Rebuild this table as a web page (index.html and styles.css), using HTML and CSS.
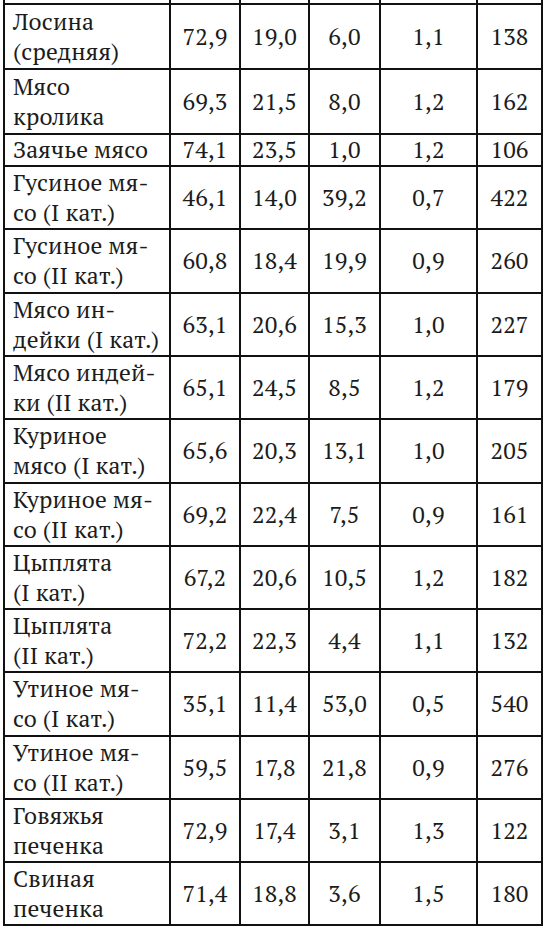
FILE: index.html
```html
<!DOCTYPE html>
<html lang="ru">
<head>
<meta charset="utf-8">
<title>Таблица</title>
<link rel="stylesheet" href="styles.css">
</head>
<body>
<table class="tbl">
  <colgroup>
    <col class="c-name"><col class="c-a"><col class="c-b"><col class="c-c"><col class="c-d"><col class="c-e">
  </colgroup>
  <tbody>
    <tr class="stub"><td></td><td></td><td></td><td></td><td></td><td></td></tr>
    <tr class="r2 r2a"><td class="name">Лосина<br>(средняя)</td><td>72,9</td><td>19,0</td><td>6,0</td><td>1,1</td><td>138</td></tr>
    <tr class="r2 r2a"><td class="name">Мясо<br>кролика</td><td>69,3</td><td>21,5</td><td>8,0</td><td>1,2</td><td>162</td></tr>
    <tr class="r1"><td class="name">Заячье мясо</td><td>74,1</td><td>23,5</td><td>1,0</td><td>1,2</td><td>106</td></tr>
    <tr class="r2"><td class="name">Гусиное мя-<br>со (I кат.)</td><td>46,1</td><td>14,0</td><td>39,2</td><td>0,7</td><td>422</td></tr>
    <tr class="r2 r2b"><td class="name">Гусиное мя-<br>со (II кат.)</td><td>60,8</td><td>18,4</td><td>19,9</td><td>0,9</td><td>260</td></tr>
    <tr class="r2"><td class="name">Мясо ин-<br>дейки (I кат.)</td><td>63,1</td><td>20,6</td><td>15,3</td><td>1,0</td><td>227</td></tr>
    <tr class="r2"><td class="name">Мясо индей-<br>ки (II кат.)</td><td>65,1</td><td>24,5</td><td>8,5</td><td>1,2</td><td>179</td></tr>
    <tr class="r2 r2b"><td class="name">Куриное<br>мясо (I кат.)</td><td>65,6</td><td>20,3</td><td>13,1</td><td>1,0</td><td>205</td></tr>
    <tr class="r2"><td class="name">Куриное мя-<br>со (II кат.)</td><td>69,2</td><td>22,4</td><td>7,5</td><td>0,9</td><td>161</td></tr>
    <tr class="r2"><td class="name">Цыплята<br>(I кат.)</td><td>67,2</td><td>20,6</td><td>10,5</td><td>1,2</td><td>182</td></tr>
    <tr class="r2"><td class="name">Цыплята<br>(II кат.)</td><td>72,2</td><td>22,3</td><td>4,4</td><td>1,1</td><td>132</td></tr>
    <tr class="r2 r2b"><td class="name">Утиное мя-<br>со (I кат.)</td><td>35,1</td><td>11,4</td><td>53,0</td><td>0,5</td><td>540</td></tr>
    <tr class="r2"><td class="name">Утиное мя-<br>со (II кат.)</td><td>59,5</td><td>17,8</td><td>21,8</td><td>0,9</td><td>276</td></tr>
    <tr class="r2"><td class="name">Говяжья<br>печенка</td><td>72,9</td><td>17,4</td><td>3,1</td><td>1,3</td><td>122</td></tr>
    <tr class="r2"><td class="name">Свиная<br>печенка</td><td>71,4</td><td>18,8</td><td>3,6</td><td>1,5</td><td>180</td></tr>
  </tbody>
</table>
</body>
</html>
```

FILE: styles.css
```css
html, body {
  margin: 0;
  padding: 0;
  background: #ffffff;
}
body {
  padding-left: 3px;
  color: #1c1c1c;
  font-family: "PT Serif";
}
.tbl {
  border-collapse: collapse;
  table-layout: fixed;
  width: 540px;
  font-family: "PT Serif";
  font-size: 23.5px;
  line-height: 30px;
}
.c-name { width: 166px; }
.c-a { width: 70px; }
.c-b { width: 69px; }
.c-c { width: 71px; }
.c-d { width: 97px; }
.c-e { width: 65px; }
.tbl td {
  border: 2px solid #111111;
  padding: 0;
  text-align: center;
  vertical-align: middle;
  white-space: nowrap;
  font-family: "PT Serif";
  letter-spacing: 0.2px;
}
.tbl td.name {
  text-align: left;
  padding-left: 8px;
}
.stub td {
  border-top: none;
  height: 3px;
}
.r2 td { height: 61px; }
.r2b td { height: 62px; }
.r2a td { height: 63px; }
.r1 td { height: 30px; }
```
